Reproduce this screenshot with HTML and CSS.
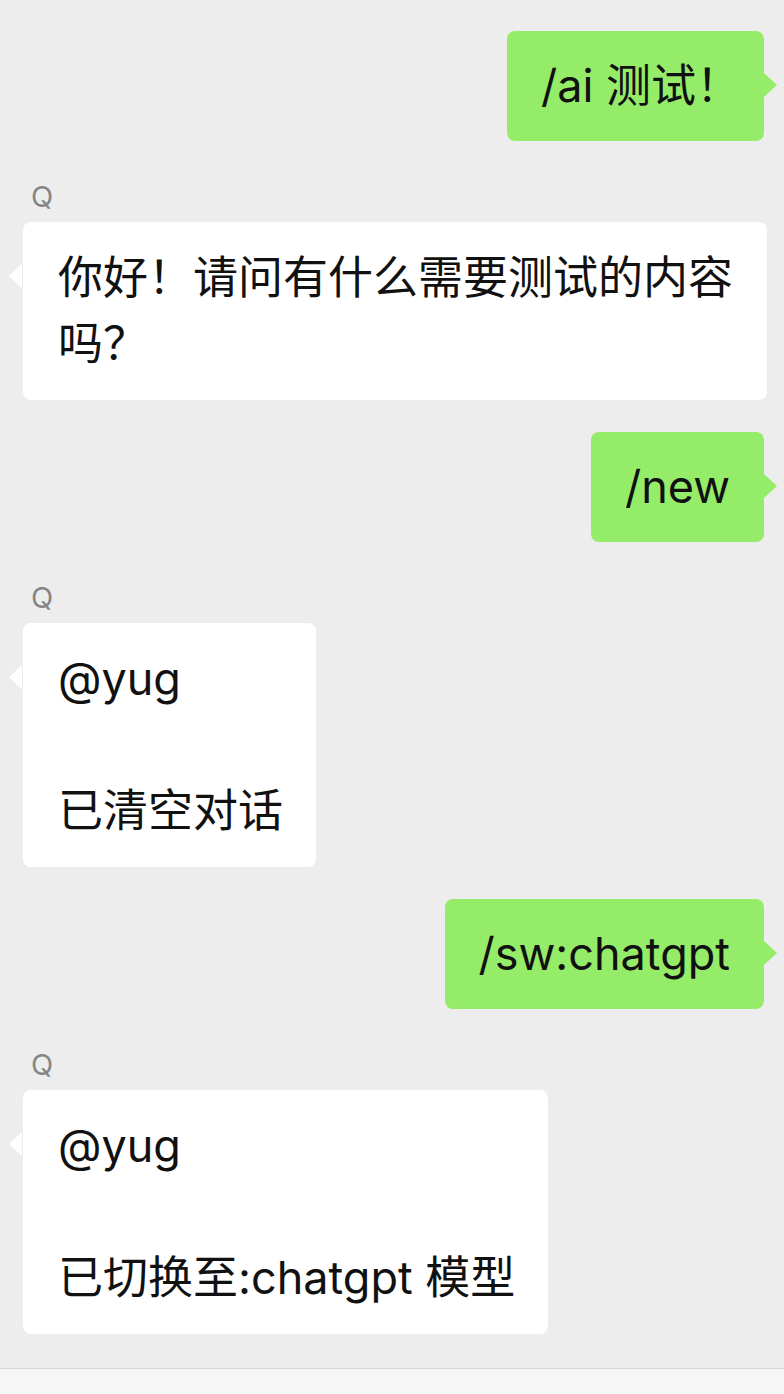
FILE: index.html
```html
<!DOCTYPE html>
<html lang="zh-CN">
<head>
<meta charset="utf-8">
<title>Chat</title>
<link rel="stylesheet" href="styles.css">
</head>
<body>
<div class="screen">
  <div class="chat">
    <div class="row out">
      <div class="bubble green">/ai 测试<span class="tight">！</span></div>
    </div>
    <div class="row in">
      <div class="name">Q</div>
      <div class="bubble white">你好！请问有什么需要测试的内容吗？</div>
    </div>
    <div class="row out">
      <div class="bubble green">/new</div>
    </div>
    <div class="row in">
      <div class="name">Q</div>
      <div class="bubble white">@yug<br><br>已清空对话</div>
    </div>
    <div class="row out">
      <div class="bubble green">/sw:chatgpt</div>
    </div>
    <div class="row in">
      <div class="name">Q</div>
      <div class="bubble white">@yug<br><br>已切换至:chatgpt 模型</div>
    </div>
  </div>
  <div class="bottom-bar"></div>
</div>
</body>
</html>
```

FILE: styles.css
```css
* { box-sizing: border-box; }
html, body {
  margin: 0;
  padding: 0;
  background: #ededed;
}
.screen {
  width: 784px;
  height: 1394px;
  display: flex;
  flex-direction: column;
  overflow: hidden;
}
.chat {
  flex: 1;
  display: flex;
  flex-direction: column;
  gap: 32px;
  padding: 31px 20px 0 23px;
}
.row {
  display: flex;
  flex-direction: column;
}
.row.out { align-items: flex-end; }
.row.in {
  align-items: flex-start;
  margin-right: -3px;
}
.name {
  font-family: "Inter", "Liberation Sans", sans-serif;
  font-size: 29px;
  line-height: 28px;
  color: #858585;
  padding: 10px 0 0 8px;
  margin-bottom: 11px;
}
.bubble {
  position: relative;
  font-family: "Inter", "Noto Sans CJK SC", sans-serif;
  font-size: 45px;
  line-height: 66px;
  color: #111111;
  padding: 22px 34px;
  border-radius: 8px;
}
.tight {
  margin-right: -11px;
}
.bubble.white {
  background: #ffffff;
  padding: 23px 33px 23px 35px;
}
.bubble.green {
  background: #95ec69;
  white-space: nowrap;
}
.bubble::after {
  content: "";
  position: absolute;
  top: 42px;
  width: 13px;
  height: 24px;
}
.bubble.green::after {
  right: -13px;
  background: #95ec69;
  clip-path: polygon(0 0, 100% 50%, 0 100%);
}
.bubble.white::after {
  left: -14px;
  background: #ffffff;
  clip-path: polygon(100% 0, 0 50%, 100% 100%);
}
.bottom-bar {
  height: 26px;
  border-top: 1px solid #d4d4d4;
  background: #f6f6f6;
}
```
